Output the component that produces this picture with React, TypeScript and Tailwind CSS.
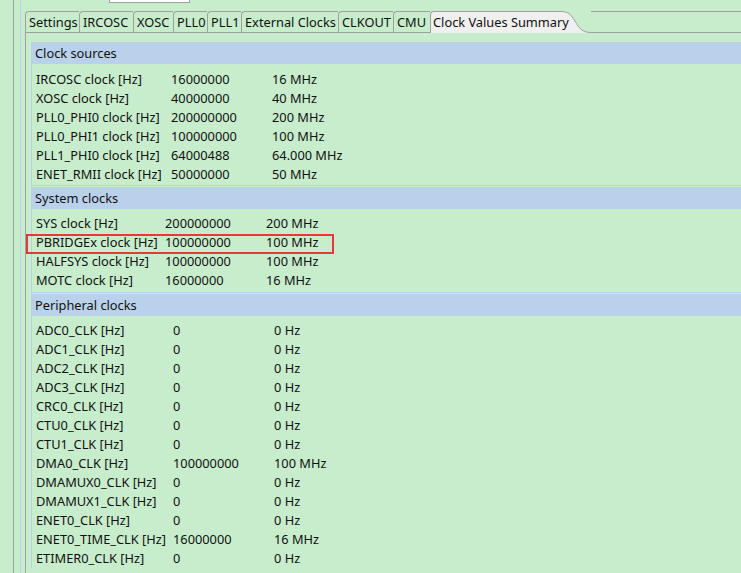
type Row = [string, string, string]

type Section = {
  title: string
  cols: [number, number]
  rows: Row[]
  bodyClass: string
  boxClass: string
  highlight?: number
}

const sections: Section[] = [
  {
    title: 'Clock sources',
    cols: [135, 101],
    bodyClass: 'pt-[6px] pb-px',
    boxClass: 'border-y',
    rows: [
      ['IRCOSC clock [Hz]', '16000000', '16 MHz'],
      ['XOSC clock [Hz]', '40000000', '40 MHz'],
      ['PLL0_PHI0 clock [Hz]', '200000000', '200 MHz'],
      ['PLL0_PHI1 clock [Hz]', '100000000', '100 MHz'],
      ['PLL1_PHI0 clock [Hz]', '64000488', '64.000 MHz'],
      ['ENET_RMII clock [Hz]', '50000000', '50 MHz'],
    ],
  },
  {
    title: 'System clocks',
    cols: [129, 101],
    bodyClass: 'pt-[5px] pb-[2px]',
    boxClass: 'border-y',
    highlight: 1,
    rows: [
      ['SYS clock [Hz]', '200000000', '200 MHz'],
      ['PBRIDGEx clock [Hz]', '100000000', '100 MHz'],
      ['HALFSYS clock [Hz]', '100000000', '100 MHz'],
      ['MOTC clock [Hz]', '16000000', '16 MHz'],
    ],
  },
  {
    title: 'Peripheral clocks',
    cols: [137, 101],
    bodyClass: 'pt-[5px]',
    boxClass: 'border-t',
    rows: [
      ['ADC0_CLK [Hz]', '0', '0 Hz'],
      ['ADC1_CLK [Hz]', '0', '0 Hz'],
      ['ADC2_CLK [Hz]', '0', '0 Hz'],
      ['ADC3_CLK [Hz]', '0', '0 Hz'],
      ['CRC0_CLK [Hz]', '0', '0 Hz'],
      ['CTU0_CLK [Hz]', '0', '0 Hz'],
      ['CTU1_CLK [Hz]', '0', '0 Hz'],
      ['DMA0_CLK [Hz]', '100000000', '100 MHz'],
      ['DMAMUX0_CLK [Hz]', '0', '0 Hz'],
      ['DMAMUX1_CLK [Hz]', '0', '0 Hz'],
      ['ENET0_CLK [Hz]', '0', '0 Hz'],
      ['ENET0_TIME_CLK [Hz]', '16000000', '16 MHz'],
      ['ETIMER0_CLK [Hz]', '0', '0 Hz'],
    ],
  },
]

const tabs: [string, number][] = [
  ['Settings', 54],
  ['IRCOSC', 54],
  ['XOSC', 40],
  ['PLL0', 34],
  ['PLL1', 34],
  ['External Clocks', 97],
  ['CLKOUT', 55],
  ['CMU', 37],
]

export default function App() {
  return (
    <div
      className="flex h-[573px] w-[741px] overflow-hidden bg-[#c7edcc] text-[12.8px] text-[#111]"
      style={{fontFamily: '"Noto Sans", "Open Sans", sans-serif'}}
    >
      {/* 左側の枠線 */}
      <div className="w-[13px] shrink-0"/>
      <div className="w-px shrink-0 bg-[#a0a0a0]"/>
      <div className="w-[6px] shrink-0"/>
      <div className="w-px shrink-0 bg-[#b9d1ea]"/>
      <div className="w-[4px] shrink-0"/>

      <div className="flex min-w-0 flex-1 flex-col">
        <div className="h-[11px] shrink-0">
          <div className="ml-[84px] h-[3px] w-[81px] border-x border-b border-[#a0a0a0] bg-white"/>
        </div>
        <TabStrip/>
        <div className="flex flex-1 flex-col gap-px border-l border-[#a0a0a0] pl-[5px] pt-[9px]">
          {sections.map((s) => (
            <SectionBox key={s.title} section={s}/>
          ))}
        </div>
      </div>
    </div>
  )
}

function TabStrip() {
  return (
    <div className="flex h-[22px] shrink-0 leading-[20px]">
      {tabs.map(([label, w]) => (
        <div
          key={label}
          className="shrink-0 overflow-hidden whitespace-nowrap rounded-tl-[4px] border-y border-l border-[#a0a0a0] pl-[3px]"
          style={{width: w}}
        >
          {label}
        </div>
      ))}
      {/* 選択中のタブ */}
      <div className="relative flex shrink-0">
        <div className="w-[127px] rounded-tl-[4px] border-l border-t border-[#a0a0a0] bg-[#f0f0f0]"/>
        <svg width="34" height="22" viewBox="0 0 34 22" className="shrink-0">
          <path d="M0 0.5 L4 0.5 C12 0.5 14 4 18 10 C22 17 25 21.5 34 21.5 L34 22 L0 22 Z" fill="#f0f0f0"/>
          <path d="M0 0.5 L4 0.5 C12 0.5 14 4 18 10 C22 17 25 21.5 34 21.5" fill="none" stroke="#a0a0a0"/>
        </svg>
        <span className="absolute left-[3px] top-px whitespace-nowrap">Clock Values Summary</span>
      </div>
      <div className="flex-1 border-y border-[#a0a0a0]"/>
    </div>
  )
}

function SectionBox({section}: { section: Section }) {
  return (
    <div className={`border-l border-[#b9d1ea] ${section.boxClass}`}>
      <div className="h-[21px] bg-[#b9d1ea] pl-[3px] leading-[21px]">{section.title}</div>
      <div className={section.bodyClass}>
        {section.rows.map((r, i) => (
          <div key={r[0]} className="relative flex h-[19px] items-center pl-[4px] leading-[19px]">
            {section.highlight === i && (
              <div className="absolute left-[-6px] top-[1px] h-[20px] w-[308px] border-2 border-[#e8393a]"/>
            )}
            <div className="shrink-0 whitespace-nowrap" style={{width: section.cols[0]}}>{r[0]}</div>
            <div className="shrink-0 whitespace-nowrap" style={{width: section.cols[1]}}>{r[1]}</div>
            <div className="whitespace-nowrap">{r[2]}</div>
          </div>
        ))}
      </div>
    </div>
  )
}
